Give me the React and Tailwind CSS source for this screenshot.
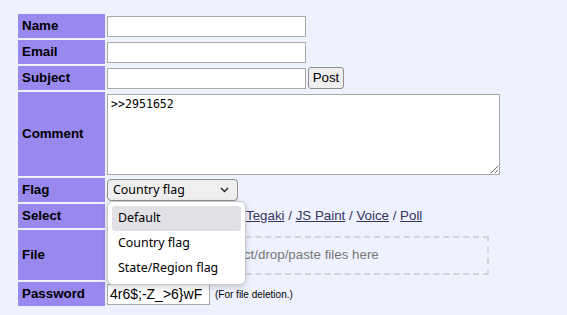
export default function App() {
  const label =
    "bg-[#9988ee] flex items-center pl-[4px] font-bold text-[13.33px] text-black font-['Liberation_Sans',Arial,sans-serif]";
  const cell = "flex items-center";
  const inputCls =
    "h-[21px] border border-[#a9a9a9] bg-white px-[2px] text-[13.33px] font-['Liberation_Sans',Arial,sans-serif] outline-none";
  return (
    <div className="relative w-[567px] h-[315px] bg-[#eef2ff] pt-[14px] pl-[18px] font-['Liberation_Sans',Arial,sans-serif] overflow-hidden">
      <div className="grid grid-cols-[87px_auto] gap-[2px] w-max">
        <div className={`${label} h-[24px]`}>Name</div>
        <div className={cell}>
          <input className={`${inputCls} w-[199px]`} />
        </div>

        <div className={`${label} h-[24px]`}>Email</div>
        <div className={cell}>
          <input className={`${inputCls} w-[199px]`} />
        </div>

        <div className={`${label} h-[24px]`}>Subject</div>
        <div className={cell}>
          <input className={`${inputCls} w-[199px]`} />
          <button className="ml-[2px] h-[22px] w-[36px] rounded-[3px] border border-[#8f8f8f] bg-[#efefef] text-[13.33px] text-black font-['Liberation_Sans',Arial,sans-serif] leading-none">
            Post
          </button>
        </div>

        <div className={`${label} h-[84px]`}>Comment</div>
        <div className={cell}>
          <textarea
            defaultValue=">>2951652"
            className="w-[393px] h-[81px] border border-[#a9a9a9] bg-white px-[3px] py-[2px] text-[11.6px] leading-[14px] font-['DejaVu_Sans_Mono',monospace] outline-none"
          />
        </div>

        <div className={`${label} h-[24px]`}>Flag</div>
        <div className={cell}>
          <div className="w-[131px] h-[22px] rounded-[4px] border border-[#8f8f8f] bg-[#efefef] flex items-center justify-between pl-[5px] pr-[8px] text-[12.4px] text-black font-['Noto_Sans',sans-serif]">
            <span>Country flag</span>
            <svg width="9" height="6" viewBox="0 0 9 6" fill="none">
              <path d="M1 1l3.5 3.5L8 1" stroke="#222" strokeWidth="1.4" />
            </svg>
          </div>
        </div>

        <div className={`${label} h-[24px]`}>Select</div>
        <div className={`${cell} text-[13.33px] text-[#34345c]`}>
          <span className="ml-[139px]">
            <a className="underline">Tegaki</a> / <a className="underline">JS Paint</a> /{" "}
            <a className="underline">Voice</a> / <a className="underline">Poll</a>
          </span>
        </div>

        <div className={`${label} h-[50px]`}>File</div>
        <div className={cell}>
          <div className="w-[382px] h-[39px] border-[2px] border-dashed border-[#d4d4dc] flex items-center justify-center text-[13.33px] text-[#777]">
            Select/drop/paste files here
          </div>
        </div>

        <div className={`${label} h-[24px]`}>Password</div>
        <div className={cell}>
          <input
            defaultValue="4r6$;-Z_>6}wF"
            className={`${inputCls} w-[103px] h-[21px] px-[1px] text-black text-[14px]`}
          />
          <span className="ml-[5px] text-[10px] text-black">(For file deletion.)</span>
        </div>
      </div>

      <div className="absolute left-[107px] top-[201px] w-[139px] h-[84px] rounded-[6px] border border-[#c8c8c8] bg-white shadow-[0_2px_6px_rgba(0,0,0,0.18)] p-[4px] flex flex-col text-[12.4px] text-black font-['Noto_Sans',sans-serif]">
        <div className="h-[25px] shrink-0 rounded-[3px] bg-[#e1e0e6] flex items-center pl-[6px]">Default</div>
        <div className="h-[25px] shrink-0 flex items-center pl-[6px]">Country flag</div>
        <div className="h-[25px] shrink-0 flex items-center pl-[6px]">State/Region flag</div>
      </div>
    </div>
  );
}
